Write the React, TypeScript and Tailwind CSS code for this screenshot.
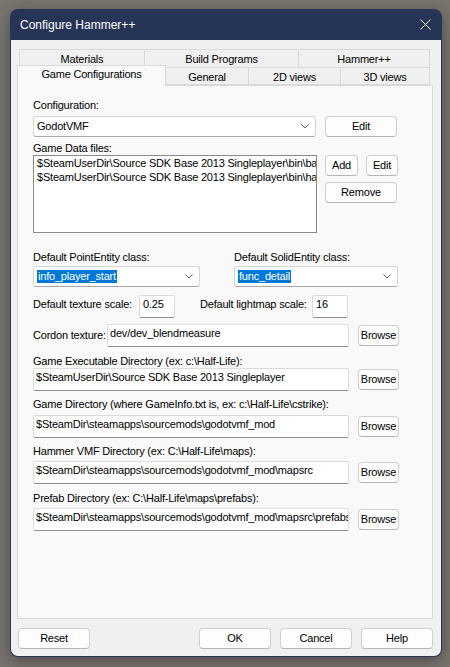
import React from "react";

type P = { children?: React.ReactNode; className?: string };

const Btn = ({ children, className = "" }: P) => (
  <div
    className={`flex items-center justify-center h-[21px] rounded-[4px] border border-[#d0d0d0] border-b-[#b5b5b5] bg-[#fdfdfd] shrink-0 ${className}`}
  >
    {children}
  </div>
);

const Input = ({ children, className = "" }: P) => (
  <div
    className={`h-[23px] bg-white border border-[#dcdcdc] border-b-[#8f8f8f] rounded-[2px] pl-[2px] pt-[2px] overflow-hidden whitespace-nowrap shrink-0 ${className}`}
  >
    {children}
  </div>
);

const Chevron = () => (
  <svg width="8" height="5" viewBox="0 0 8 5" className="ml-auto mr-[6px] shrink-0">
    <path d="M0.5 0.5 L4 4 L7.5 0.5" fill="none" stroke="#606060" strokeWidth="1" />
  </svg>
);

const Combo = ({ children, className = "" }: P) => (
  <div
    className={`h-[21px] flex items-center bg-white border border-[#d5d5d5] border-b-[#a8a8a8] rounded-[3px] pl-[3px] overflow-hidden whitespace-nowrap shrink-0 ${className}`}
  >
    {children}
    <Chevron />
  </div>
);

const Sel = ({ children }: P) => (
  <span className="bg-[#0078d7] text-white px-px">{children}</span>
);

const DirRow = ({ label, value, mt, imt }: { label: string; value: string; mt: string; imt: string }) => (
  <>
    <div className={`${mt} h-[13px] whitespace-nowrap`}>{label}</div>
    <div className={`${imt} flex items-center`}>
      <Input className="w-[316px]">{value}</Input>
      <Btn className="w-[41px] ml-[9px]">Browse</Btn>
    </div>
  </>
);

export default function App() {
  return (
    <div className="w-[450px] h-[667px] bg-[#78746e] pt-[9px] pl-[10px] font-['Liberation_Sans',Arial,sans-serif] text-[11px] leading-[13px] tracking-[-0.2px] text-black">
      <div className="w-[432px] h-[648px] rounded-[8px] bg-[#253457] flex flex-col overflow-hidden shadow-[0_4px_16px_rgba(0,0,0,0.35)]">
        {/* Title bar */}
        <div className="h-[31px] flex items-center pl-[10px] text-white text-[12px] leading-[14px] tracking-normal shrink-0">
          <span>Configure Hammer++</span>
          <svg width="11" height="11" viewBox="0 0 11 11" className="ml-auto mr-[11px]">
            <path d="M0.5 0.5 L10.5 10.5 M10.5 0.5 L0.5 10.5" stroke="#ffffff" strokeWidth="1" />
          </svg>
        </div>

        {/* Body */}
        <div className="mx-px mb-px flex-1 bg-[#f0f0f0] rounded-b-[7px] flex flex-col pt-[9px]">
          {/* Tab row 1 */}
          <div className="flex ml-[8px] h-[18px] shrink-0">
            <div className="w-[125px] border-t border-l border-[#d9d9d9] bg-[#f0f0f0] flex justify-center pt-[3px]">Materials</div>
            <div className="w-[154px] border-t border-l border-[#d9d9d9] bg-[#f0f0f0] flex justify-center pt-[3px]">Build Programs</div>
            <div className="w-[132px] border-t border-l border-r border-[#d9d9d9] bg-[#f0f0f0] flex justify-center pt-[3px]">Hammer++</div>
          </div>
          {/* Tab row 2 */}
          <div className="flex ml-[6px] h-[19px] -mb-px relative z-10 shrink-0">
            <div className="w-[149px] h-[21px] -mt-[2px] border-t border-l border-r border-[#d9d9d9] bg-[#f9f9f9] flex justify-center pt-[2px]">
              Game Configurations
            </div>
            <div className="w-[83px] h-[18px] border-t border-r border-b border-[#d9d9d9] bg-[#f0f0f0] flex justify-center pt-[3px]">General</div>
            <div className="w-[92px] h-[18px] border-t border-r border-b border-[#d9d9d9] bg-[#f0f0f0] flex justify-center pt-[3px]">2D views</div>
            <div className="w-[89px] h-[18px] border-t border-r border-b border-[#d9d9d9] bg-[#f0f0f0] flex justify-center pt-[3px]">3D views</div>
          </div>

          {/* Panel */}
          <div className="w-[416px] h-[534px] ml-[6px] border border-[#d9d9d9] bg-[#f9f9f9] pl-[15px] flex flex-col shrink-0">
            <div className="mt-[13px] h-[13px]">Configuration:</div>
            <div className="mt-[4px] flex items-center">
              <Combo className="w-[283px]">GodotVMF</Combo>
              <Btn className="w-[72px] ml-[9px]">Edit</Btn>
            </div>

            <div className="mt-[5px] h-[13px]">Game Data files:</div>
            <div className="flex">
              <div className="w-[284px] h-[78px] bg-white border border-[#8a8a8a] pl-[3px] overflow-hidden whitespace-nowrap leading-[14px] shrink-0">
                <div>$SteamUserDir\Source SDK Base 2013 Singleplayer\bin\base.fgd</div>
                <div>$SteamUserDir\Source SDK Base 2013 Singleplayer\bin\halflife2.fgd</div>
              </div>
              <div className="ml-[8px] flex flex-col">
                <div className="flex">
                  <Btn className="w-[33px] h-[20px]">Add</Btn>
                  <Btn className="w-[32px] h-[20px] ml-[8px]">Edit</Btn>
                </div>
                <Btn className="w-[72px] h-[20px] mt-[6px]">Remove</Btn>
              </div>
            </div>

            <div className="mt-[18px] flex h-[13px]">
              <div className="w-[201px]">Default PointEntity class:</div>
              <div>Default SolidEntity class:</div>
            </div>
            <div className="mt-[2px] flex">
              <Combo className="w-[167px]">
                <Sel>info_player_start</Sel>
              </Combo>
              <Combo className="w-[164px] ml-[34px]">
                <Sel>func_detail</Sel>
              </Combo>
            </div>

            <div className="mt-[8px] flex items-start">
              <div className="w-[106px] mt-[3px] whitespace-nowrap">Default texture scale:</div>
              <Input className="w-[36px] pl-[3px]">0.25</Input>
              <div className="w-[112px] ml-[25px] mt-[3px] whitespace-nowrap">Default lightmap scale:</div>
              <Input className="w-[36px] pl-[3px]">16</Input>
            </div>

            <div className="mt-[6px] flex items-center">
              <div className="w-[74px] whitespace-nowrap">Cordon texture:</div>
              <Input className="w-[242px]">dev/dev_blendmeasure</Input>
              <Btn className="w-[41px] ml-[9px]">Browse</Btn>
            </div>

            <DirRow
              label="Game Executable Directory (ex: c:\Half-Life):"
              value="$SteamUserDir\Source SDK Base 2013 Singleplayer"
              mt="mt-[8px]"
              imt="mt-0"
            />
            <DirRow
              label="Game Directory (where GameInfo.txt is, ex: c:\Half-Life\cstrike):"
              value="$SteamDir\steamapps\sourcemods\godotvmf_mod"
              mt="mt-[7px]"
              imt="mt-[4px]"
            />
            <DirRow
              label="Hammer VMF Directory (ex: C:\Half-Life\maps):"
              value="$SteamDir\steamapps\sourcemods\godotvmf_mod\mapsrc"
              mt="mt-[7px]"
              imt="mt-[3px]"
            />
            <DirRow
              label="Prefab Directory (ex: C:\Half-Life\maps\prefabs):"
              value="$SteamDir\steamapps\sourcemods\godotvmf_mod\mapsrc\prefabs"
              mt="mt-[8px]"
              imt="mt-[3px]"
            />
          </div>

          {/* Bottom buttons */}
          <div className="mt-[9px] flex">
            <Btn className="w-[72px] ml-[7px]">Reset</Btn>
            <Btn className="w-[72px] ml-[109px] border-[#1c6fc4] border-b-[#1c6fc4]">OK</Btn>
            <Btn className="w-[72px] ml-[9px]">Cancel</Btn>
            <Btn className="w-[72px] ml-[9px]">Help</Btn>
          </div>
        </div>
      </div>
    </div>
  );
}
